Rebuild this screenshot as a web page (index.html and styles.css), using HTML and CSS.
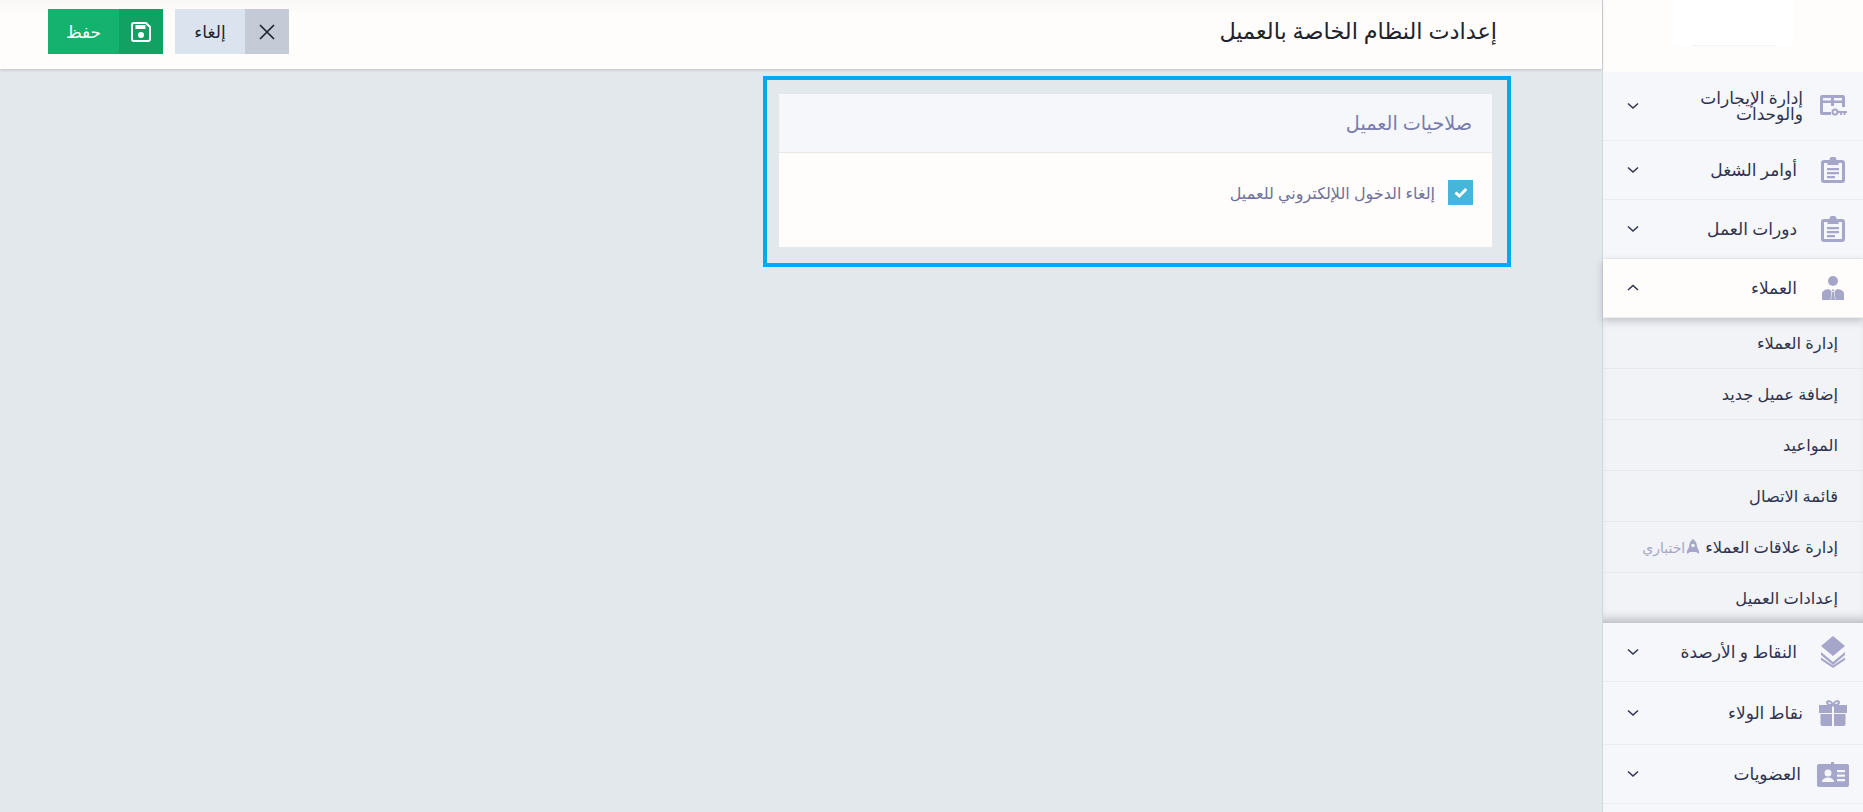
FILE: index.html
```html
<!DOCTYPE html>
<html lang="ar" dir="rtl">
<head>
    <meta charset="utf-8">
    <title>إعدادت النظام الخاصة بالعميل</title>
    <link rel="stylesheet" href="styles.css">
</head>
<body>
    <aside class="sidebar">
        <div class="logo"><div class="logo-box"></div></div>
        <nav>
            <a class="item item--tall">
                <svg class="ico" viewBox="0 0 27 22"><path d="M2 0h21a2 2 0 0 1 2 2v10h-3V8h-8v3h-3V8H3v9h8v3H2a2 2 0 0 1-2-2V2a2 2 0 0 1 2-2zM3 3v2.500h8V3zM14 3v2.500h8V3z" fill="#a5a6c9" fill-rule="evenodd"/><circle cx="15" cy="17" r="2.500" fill="none" stroke="#a5a6c9" stroke-width="2"/><path d="M18 16h9v2h-1.500v2h-2v-2h-1.500v2h-2v-2H18z" fill="#a5a6c9"/></svg>
                <span class="label">إدارة الإيجارات والوحدات</span>
                <svg class="chev" viewBox="0 0 12 8"><path d="M1 1.500l5 4.500 5-4.500" fill="none" stroke="#2f3350" stroke-width="1.500"/></svg>
            </a>
            <a class="item">
                <svg class="ico" viewBox="0 0 24 26"><path d="M8.500 3V3a3.500 3.500 0 0 1 7 0h5.500a3 3 0 0 1 3 3v17a3 3 0 0 1-3 3H3a3 3 0 0 1-3-3V6a3 3 0 0 1 3-3zM3 6v17h18V6h-3.500v2h-11V6z" fill="#a5a6c9" fill-rule="evenodd"/><path d="M6 11h12v2.200H6zM6 15h12v2.200H6zM6 19h8v2.200H6z" fill="#a5a6c9"/></svg>
                <span class="label">أوامر الشغل</span>
                <svg class="chev" viewBox="0 0 12 8"><path d="M1 1.500l5 4.500 5-4.500" fill="none" stroke="#2f3350" stroke-width="1.500"/></svg>
            </a>
            <a class="item">
                <svg class="ico" viewBox="0 0 24 26"><path d="M8.500 3V3a3.500 3.500 0 0 1 7 0h5.500a3 3 0 0 1 3 3v17a3 3 0 0 1-3 3H3a3 3 0 0 1-3-3V6a3 3 0 0 1 3-3zM3 6v17h18V6h-3.500v2h-11V6z" fill="#a5a6c9" fill-rule="evenodd"/><path d="M6 11h12v2.200H6zM6 15h12v2.200H6zM6 19h8v2.200H6z" fill="#a5a6c9"/></svg>
                <span class="label">دورات العمل</span>
                <svg class="chev" viewBox="0 0 12 8"><path d="M1 1.500l5 4.500 5-4.500" fill="none" stroke="#2f3350" stroke-width="1.500"/></svg>
            </a>
            <a class="item item--open">
                <svg class="ico ico--user" viewBox="0 0 22 24"><circle cx="11" cy="5" r="5" fill="#a5a6c9"/><path d="M0 24v-6.500c0-2 2.500-4 6.500-4.500L9.500 15l-1 9zM22 24v-6.500c0-2-2.500-4-6.500-4.500L12.500 15l1 9zM9.700 13.500h2.600l-.5 1.500h-1.600zM10 16h2l1 8H9z" fill="#a5a6c9"/></svg>
                <span class="label">العملاء</span>
                <svg class="chev" viewBox="0 0 12 8"><path d="M1 6l5-4.500L11 6" fill="none" stroke="#2f3350" stroke-width="1.500"/></svg>
            </a>
            <div class="sub">
                <a>إدارة العملاء</a>
                <a>إضافة عميل جديد</a>
                <a>المواعيد</a>
                <a>قائمة الاتصال</a>
                <a>إدارة علاقات العملاء
                    <span class="beta"><svg viewBox="0 0 12 16"><path d="M6 0c3 2 4 5 4 8l2 4v3l-3-2H3l-3 2v-3l2-4c0-3 1-6 4-8z" fill="#a5a6c9"/><circle cx="6" cy="6.500" r="1.800" fill="#f2f3f7"/></svg>اختباري</span>
                </a>
                <a>إعدادات العميل</a>
            </div>
            <a class="item item--points">
                <svg class="ico" viewBox="0 0 24 32"><path d="M12 0l12 10-12 10L0 10z" fill="#a5a6c9"/><path d="M0 16l12 10 12-10v3L12 29 0 19z" fill="#a5a6c9"/><path d="M0 21.500l12 8 12-8V24L12 32 0 24z" fill="#a5a6c9"/></svg>
                <span class="label">النقاط و الأرصدة</span>
                <svg class="chev" viewBox="0 0 12 8"><path d="M1 1.500l5 4.500 5-4.500" fill="none" stroke="#2f3350" stroke-width="1.500"/></svg>
            </a>
            <a class="item item--loyal">
                <svg class="ico ico--wide" viewBox="0 0 28 26"><path d="M0 5h13v8H0zM15 5h13v8H15zM1.500 14H13v12H3.500a2 2 0 0 1-2-2zM15 14h11.500v10a2 2 0 0 1-2 2H15z" fill="#a5a6c9"/><path d="M14 5C11 5 8 4.500 8 2.500S12 0 14 5c2-5 6-4.500 6-2.500S17 5 14 5z" fill="none" stroke="#a5a6c9" stroke-width="2"/></svg>
                <span class="label">نقاط الولاء</span>
                <svg class="chev" viewBox="0 0 12 8"><path d="M1 1.500l5 4.500 5-4.500" fill="none" stroke="#2f3350" stroke-width="1.500"/></svg>
            </a>
            <a class="item">
                <svg class="ico ico--card" viewBox="0 0 32 25"><path d="M2 2h12V0h3v2h13a2 2 0 0 1 2 2v19a2 2 0 0 1-2 2H2a2 2 0 0 1-2-2V4a2 2 0 0 1 2-2z" fill="#a5a6c9"/><circle cx="11" cy="11" r="3.500" fill="#f6f7fa"/><path d="M5 20c0-3 3-4.500 6-4.500s6 1.500 6 4.500zM20 8h8v2.200h-8zM20 12.500h8v2.200h-8zM20 17h8v2.200h-8z" fill="#f6f7fa"/></svg>
                <span class="label">العضويات</span>
                <svg class="chev" viewBox="0 0 12 8"><path d="M1 1.500l5 4.500 5-4.500" fill="none" stroke="#2f3350" stroke-width="1.500"/></svg>
            </a>
        </nav>
    </aside>

    <div class="main">
        <header class="topbar">
            <h1>إعدادت النظام الخاصة بالعميل</h1>
            <div class="actions">
                <button class="btn btn--cancel">
                    <span class="btn-ico"><svg viewBox="0 0 16 16"><path d="M1 1l14 14M15 1L1 15" stroke="#20232e" stroke-width="1.700" fill="none"/></svg></span>
                    <span class="btn-txt">إلغاء</span>
                </button>
                <button class="btn btn--save">
                    <span class="btn-ico"><svg viewBox="0 0 20 20"><path d="M3 1h12l4 4v12a2 2 0 0 1-2 2H3a2 2 0 0 1-2-2V3a2 2 0 0 1 2-2z" fill="none" stroke="#fff" stroke-width="2"/><path d="M4.500 3h10v4h-10z" fill="#fff"/><circle cx="10" cy="13" r="3" fill="#fff"/></svg></span>
                    <span class="btn-txt">حفظ</span>
                </button>
            </div>
        </header>

        <section class="highlight">
            <div class="card">
                <div class="card-head">صلاحيات العميل</div>
                <div class="card-body">
                    <label class="check">
                        <span class="box"><svg viewBox="0 0 14 11"><path d="M1.500 5.500l3.800 3.500 7-7" fill="none" stroke="#fff" stroke-width="3"/></svg></span>
                        إلغاء الدخول اللإلكتروني للعميل
                    </label>
                </div>
            </div>
        </section>
    </div>
</body>
</html>
```

FILE: styles.css
```css
html, body {
    margin: 0;
    height: 812px;
    overflow: hidden;
    font-family: "Noto Sans", "DejaVu Sans", sans-serif;
    background: #e3e8ed;
    color: #2f3350;
}
body {
    display: flex;
}
svg {
    display: block;
}

/* sidebar */
.sidebar {
    width: 260px;
    flex: none;
    border-left: 1px solid #d3d6db;
    background: #f6f7fa;
}
.logo {
    height: 72px;
    background: #fffdfb;
    display: flex;
    justify-content: center;
}
.logo-box {
    width: 120px;
    height: 46px;
    background: #fff;
    position: relative;
}
.logo-box::after {
    content: "";
    position: absolute;
    bottom: 0;
    left: 19px;
    right: 17px;
    height: 1px;
    background: #f2f2f2;
}
.item {
    height: 58px;
    display: flex;
    align-items: center;
    padding: 0 18px 0 24px;
    border-bottom: 1px solid #eaecef;
    font-size: 17px;
    color: #2f3350;
}
.item--tall {
    height: 68px;
}
.item--open {
    background: #fffdfb;
    box-shadow: 0 3px 8px rgba(40, 44, 60, .25);
    position: relative;
}
.item--loyal {
    height: 62px;
}
.ico {
    width: 24px;
    height: 26px;
    flex: none;
}
.ico--wide {
    width: 28px;
    margin-right: -2px;
    margin-left: -2px;
}
.ico--card {
    width: 32px;
    height: 25px;
    margin-right: -4px;
    margin-left: -4px;
}
.ico--user {
    height: 24px;
}
.item--tall .ico {
    width: 27px;
    height: 22px;
    margin-right: -2px;
    margin-left: -1px;
}
.item--points .ico {
    height: 32px;
}
.label {
    flex: 1;
    margin-right: 24px;
    line-height: 16px;
}
.item--tall .label,
.item--loyal .label {
    margin-right: 18px;
}
.ico--card + .label {
    margin-right: 20px;
}
.item--tall .label {
    padding-left: 50px;
}
.chev {
    width: 12px;
    height: 8px;
    flex: none;
}
.sub {
    background: #f2f3f7;
    box-shadow: inset 0 -10px 10px -6px rgba(40, 44, 60, .28);
}
.sub a {
    height: 50px;
    display: flex;
    align-items: center;
    padding-right: 25px;
    border-bottom: 1px solid #e6e9ee;
    font-size: 16.300px;
    color: #2f3350;
}
.sub a:last-child {
    border-bottom: 0;
}
.beta {
    display: flex;
    align-items: center;
    gap: 2px;
    margin-right: 6px;
    color: #a5a6c9;
    font-size: 14px;
}
.beta svg {
    width: 12px;
    height: 16px;
}

/* top bar */
.main {
    flex: 1;
    min-width: 0;
}
.topbar {
    height: 69px;
    box-sizing: border-box;
    background: linear-gradient(#f8f7f6, #fffdfc 14px);
    box-shadow: 0 1px 3px rgba(40, 44, 60, .2);
    display: flex;
    align-items: center;
    justify-content: space-between;
    padding: 0 105px 6px 48px;
}
h1 {
    margin: 0 0 2px;
    font-size: 22.400px;
    font-weight: 400;
    color: #20232e;
}
.actions {
    display: flex;
    gap: 12px;
}
.btn {
    display: flex;
    width: 114px;
    height: 45px;
    padding: 0;
    border: 0;
    font: inherit;
    font-size: 17px;
}
.btn-ico {
    width: 44px;
    display: flex;
    align-items: center;
    justify-content: center;
}
.btn-txt {
    flex: 1;
    align-self: center;
}
.btn--cancel {
    background: #dae3ee;
    color: #20232e;
}
.btn--cancel .btn-ico {
    background: #c4cbd6;
}
.btn--cancel svg {
    width: 16px;
    height: 16px;
}
.btn--save {
    width: 115px;
    background: #14b16f;
    color: #fff;
}
.btn--save .btn-ico {
    background: #11a163;
}
.btn--save svg {
    width: 20px;
    height: 20px;
}

/* highlighted card */
.highlight {
    width: 713px;
    margin: 7px 91px 0 0;
    border: 4px solid #00aaf2;
    padding: 14px 15px 16px 12px;
}
.card {
    background: #fffdfc;
}
.card-head {
    height: 56px;
    display: flex;
    align-items: center;
    padding: 0 20px 2px 0;
    background: #f6f7fa;
    border-bottom: 1px solid #e5e7ea;
    font-size: 19.200px;
    color: #7a7cab;
}
.card-body {
    height: 94px;
    padding: 27px 19px 0 0;
    box-sizing: border-box;
}
.check {
    display: flex;
    align-items: center;
    gap: 13px;
    font-size: 16px;
    color: #6f7199;
}
.box {
    width: 25px;
    height: 25px;
    background: #45b6d9;
    display: flex;
    align-items: center;
    justify-content: center;
}
.box svg {
    width: 14px;
    height: 11px;
}
```
